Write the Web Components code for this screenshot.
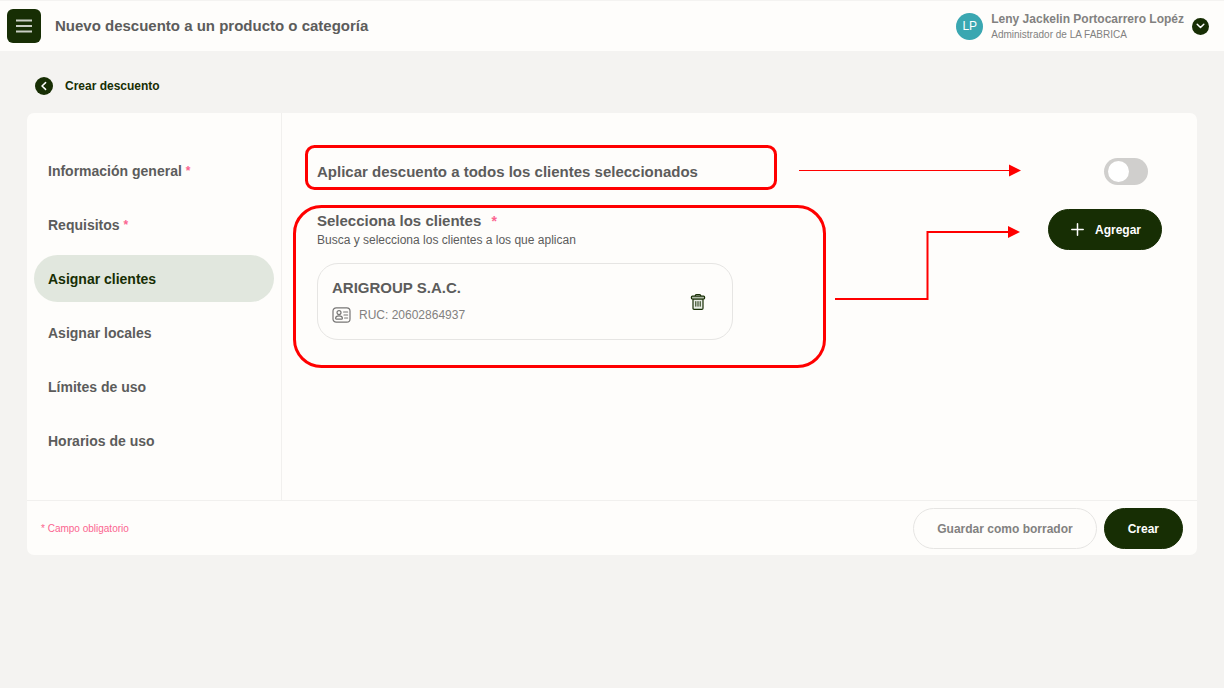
<!DOCTYPE html>
<html lang="es">
<head>
  <meta charset="utf-8">
  <meta name="viewport" content="width=device-width, initial-scale=1">
  <title>Nuevo descuento a un producto o categoría</title>
  <style>
    html {
      --green: #172e04;
      --paper: #fefdfb;
      --page: #f4f3f1;
      --line: #f1f0ee;
      --outline: #e6e5e3;
      --text: #5c5c5b;
      --muted: #828180;
      --pink: #fb6590;
      --mark: #ff0000;
    }

    body {
      margin: 0;
      min-height: 100vh;
      background: var(--page);
      color: var(--text);
      font: 12px/16px "Liberation Sans", Arial, sans-serif;
    }
  </style>
</head>
<body>
  <discount-page></discount-page>

  <script>
    class AppHeader extends HTMLElement {
      shadowRoot = this.attachShadow({ mode: 'open' });

      connectedCallback() {
        this.shadowRoot.innerHTML = `
          <style>
            :host {
              display: flex;
              align-items: center;
              box-sizing: border-box;
              height: 51px;
              padding: 0 15px 0 7px;
              border-top: 1px solid var(--page);
              background: var(--paper);
            }

            button {
              display: grid;
              place-items: center;
              padding: 0;
              border: 0;
              background: var(--green);
              color: #fff;
            }

            .menu {
              width: 34px;
              height: 34px;
              border-radius: 6px;
            }

            h1 {
              flex: 1;
              margin: 0 0 0 14px;
              font-size: 15px;
              line-height: 20px;
            }

            .avatar {
              width: 27px;
              height: 27px;
              margin-right: 8px;
              border-radius: 50%;
              background: #3aa7b1;
              color: #fff;
              line-height: 27px;
              text-align: center;
            }

            .user {
              padding-top: 2px;
              color: var(--muted);
              font-size: 10px;
              line-height: 15px;
            }

            .user b {
              display: block;
              font-size: 12px;
            }

            .more {
              width: 17px;
              height: 17px;
              margin-left: 8px;
              border-radius: 50%;
            }
          </style>
          <button class="menu" type="button" aria-label="Menú">
            <svg width="16" height="14" fill="none" stroke="#c9cec4" stroke-width="1.8">
              <path d="M0 1.5h16M0 7h16M0 12.5h16"/>
            </svg>
          </button>
          <h1><slot></slot></h1>
          <div class="avatar">LP</div>
          <div class="user">
            <b><slot name="user"></slot></b>
            <slot name="role"></slot>
          </div>
          <button class="more" type="button" aria-label="Cuenta">
            <svg width="9" height="6" fill="none" stroke="currentColor" stroke-width="1.5" stroke-linecap="round" stroke-linejoin="round">
              <path d="M1.2 1.2 4.5 4.5 7.8 1.2"/>
            </svg>
          </button>
        `;
      }
    }

    class BackLink extends HTMLElement {
      shadowRoot = this.attachShadow({ mode: 'open' });

      connectedCallback() {
        this.shadowRoot.innerHTML = `
          <style>
            :host {
              display: flex;
            }

            a {
              display: flex;
              align-items: center;
              gap: 12px;
              color: var(--green);
              font-weight: bold;
              text-decoration: none;
            }
          </style>
          <a href="#">
            <svg width="18" height="18">
              <circle cx="9" cy="9" r="9" fill="var(--green)"/>
              <path d="M10.6 5.6 7 9l3.6 3.4" fill="none" stroke="#fff" stroke-width="1.5" stroke-linecap="round" stroke-linejoin="round"/>
            </svg>
            <slot></slot>
          </a>
        `;
      }
    }

    class StepLink extends HTMLElement {
      shadowRoot = this.attachShadow({ mode: 'open' });

      connectedCallback() {
        this.shadowRoot.innerHTML = `
          <style>
            :host {
              display: block;
            }

            a {
              display: flex;
              align-items: center;
              gap: 4px;
              height: 47px;
              padding: 0 14px;
              border-radius: 24px;
              color: var(--text);
              font-size: 14px;
              font-weight: bold;
              text-decoration: none;
            }

            :host([active]) a {
              background: #e1e7de;
              color: var(--green);
            }

            .required {
              color: var(--pink);
              font-size: 12px;
            }
          </style>
          <a href="#">
            <slot></slot>
            ${this.hasAttribute('required') ? '<span class="required">*</span>' : ''}
          </a>
        `;
      }
    }

    class PillButton extends HTMLElement {
      shadowRoot = this.attachShadow({ mode: 'open' });

      connectedCallback() {
        this.shadowRoot.innerHTML = `
          <style>
            :host {
              display: block;
            }

            button {
              display: flex;
              align-items: center;
              gap: 11px;
              height: 41px;
              padding: 0 23px;
              border: 1px solid var(--green);
              border-radius: 21px;
              background: var(--green);
              color: #fff;
              font: bold 12px/16px "Liberation Sans", Arial, sans-serif;
            }

            :host([outline]) button {
              border-color: var(--outline);
              background: transparent;
              color: var(--muted);
            }

            :host([small]) button {
              padding: 0 20px 0 22px;
            }
          </style>
          <button type="button"><slot name="icon"></slot><slot></slot></button>
        `;
      }
    }

    class ToggleSwitch extends HTMLElement {
      shadowRoot = this.attachShadow({ mode: 'open' });

      connectedCallback() {
        this.shadowRoot.innerHTML = `
          <style>
            :host {
              display: flex;
            }

            label {
              display: flex;
              flex: 1;
              align-items: center;
              justify-content: space-between;
            }

            input {
              appearance: none;
              box-sizing: border-box;
              width: 44px;
              height: 27px;
              margin: 0;
              padding: 3px 4px;
              border-radius: 14px;
              background: #d0cfcd;
            }

            input::before {
              content: '';
              display: block;
              width: 21px;
              height: 21px;
              border-radius: 50%;
              background: #fff;
            }

            input:checked {
              padding-left: 19px;
              background: var(--green);
            }
          </style>
          <label><slot></slot><input type="checkbox" role="switch"></label>
        `;
      }
    }

    class ClientCard extends HTMLElement {
      shadowRoot = this.attachShadow({ mode: 'open' });

      connectedCallback() {
        this.shadowRoot.innerHTML = `
          <style>
            :host {
              display: flex;
              align-items: center;
              justify-content: space-between;
              box-sizing: border-box;
              padding: 14px 26px 14px 14px;
              border: 1px solid var(--outline);
              border-radius: 21px;
            }

            h3 {
              margin: 0 0 7px;
              font-size: 15px;
              line-height: 20px;
            }

            p {
              display: flex;
              align-items: center;
              gap: 8px;
              margin: 0;
              color: var(--muted);
              line-height: 20px;
            }

            button {
              padding: 0;
              border: 0;
              background: none;
            }

            svg {
              display: block;
              fill: none;
            }
          </style>
          <div>
            <h3><slot></slot></h3>
            <p>
              <svg width="19" height="16" stroke="#777675" stroke-width="1.2" stroke-linecap="round">
                <rect x="1" y=".8" width="17" height="14.4" rx="3.2"/>
                <circle cx="7" cy="5.6" r="2"/>
                <path d="M3.6 11.2c0-1.7 1.5-2.3 3.4-2.3s3.4.6 3.4 2.3c0 .6-.3.9-.8.9H4.4c-.5 0-.8-.3-.8-.9Z"/>
                <path d="M11.6 5h4M12 8h3.6M12.6 11h3"/>
              </svg>
              <slot name="ruc"></slot>
            </p>
          </div>
          <button type="button" aria-label="Eliminar cliente">
            <svg width="16" height="18" stroke="var(--green)" stroke-width="1.2" stroke-linejoin="round">
              <path d="M3 5.8h10v9.4c0 .7-.4 1.1-1.1 1.1H4.1c-.7 0-1.1-.4-1.1-1.1Z" fill="#e9ede6"/>
              <rect x="1.4" y="3.2" width="13.2" height="2.8" rx="1" fill="#b3bdab"/>
              <path d="M5.2 3.1c0-1 .5-1.5 1.3-1.5h3c.8 0 1.3.5 1.3 1.5"/>
              <path d="M5.8 8.2v5.4M8 8.2v5.4M10.2 8.2v5.4" stroke-width="1"/>
            </svg>
          </button>
        `;
      }
    }

    // Red frames and arrows that lie over the form
    class GuideMarks extends HTMLElement {
      shadowRoot = this.attachShadow({ mode: 'open' });

      connectedCallback() {
        this.shadowRoot.innerHTML = `
          <style>
            :host {
              position: absolute;
              inset: 0;
              pointer-events: none;
            }

            svg {
              display: block;
              width: 100%;
              height: 100%;
              fill: none;
              stroke: var(--mark);
            }

            .head {
              fill: var(--mark);
              stroke: none;
            }
          </style>
          <svg aria-hidden="true">
            <rect x="24.5" y="33.5" width="469" height="42" rx="8" stroke-width="3"/>
            <rect x="12.5" y="93.5" width="530" height="160" rx="27" stroke-width="3"/>
            <path d="M517 57.5h211"/>
            <path class="head" d="m727 51.5 12 6-12 6Z"/>
            <path d="M553 186h92.5v-67h81" stroke-width="2"/>
            <path class="head" d="m726 113 12 6-12 6Z"/>
          </svg>
        `;
      }
    }

    class DiscountPage extends HTMLElement {
      shadowRoot = this.attachShadow({ mode: 'open' });

      connectedCallback() {
        this.shadowRoot.innerHTML = `
          <style>
            :host {
              display: block;
            }

            main {
              padding: 26px 27px;
            }

            back-link {
              padding-left: 8px;
            }

            .card {
              margin-top: 18px;
              border-radius: 7px;
              background: var(--paper);
            }

            .body {
              display: grid;
              grid-template-columns: 255px 1fr;
              border-bottom: 1px solid var(--line);
            }

            nav {
              display: flex;
              flex-direction: column;
              gap: 7px;
              padding: 34px 7px 36px;
              border-right: 1px solid var(--line);
            }

            .content {
              position: relative;
              padding: 45px 35px 35px;
            }

            toggle-switch {
              padding-right: 14px;
            }

            h2 {
              margin: 0;
              font-size: 15px;
              line-height: 20px;
            }

            h2 span {
              margin-left: 6px;
              color: var(--pink);
              font-size: 14px;
            }

            .clients {
              display: flex;
              align-items: flex-start;
              justify-content: space-between;
              margin-top: 24px;
            }

            .intro {
              padding-top: 2px;
            }

            .intro p {
              margin: 0;
              line-height: 18px;
            }

            .list {
              display: grid;
              grid-template-columns: 1fr 1fr;
              gap: 13px;
              margin-top: 13px;
            }

            footer {
              display: flex;
              align-items: center;
              gap: 7px;
              padding: 7px 14px 6px;
            }

            footer small {
              flex: 1;
              color: var(--pink);
              font-size: 10px;
            }
          </style>
          <app-header>
            Nuevo descuento a un producto o categoría
            <span slot="user">Leny Jackelin Portocarrero Lopéz</span>
            <span slot="role">Administrador de LA FABRICA</span>
          </app-header>
          <main>
            <back-link>Crear descuento</back-link>
            <div class="card">
              <div class="body">
                <nav>
                  <step-link required>Información general</step-link>
                  <step-link required>Requisitos</step-link>
                  <step-link active>Asignar clientes</step-link>
                  <step-link>Asignar locales</step-link>
                  <step-link>Límites de uso</step-link>
                  <step-link>Horarios de uso</step-link>
                </nav>
                <section class="content">
                  <toggle-switch><h2>Aplicar descuento a todos los clientes seleccionados</h2></toggle-switch>
                  <div class="clients">
                    <div class="intro">
                      <h2>Selecciona los clientes <span>*</span></h2>
                      <p>Busca y selecciona los clientes a los que aplican</p>
                    </div>
                    <pill-button small>
                      <svg slot="icon" width="13" height="13" fill="none" stroke="currentColor" stroke-width="1.5" stroke-linecap="round">
                        <path d="M6.5 .8v11.4M.8 6.5h11.4"/>
                      </svg>
                      Agregar
                    </pill-button>
                  </div>
                  <div class="list">
                    <client-card>ARIGROUP S.A.C.<span slot="ruc">RUC: 20602864937</span></client-card>
                  </div>
                  <guide-marks></guide-marks>
                </section>
              </div>
              <footer>
                <small>* Campo obligatorio</small>
                <pill-button outline>Guardar como borrador</pill-button>
                <pill-button>Crear</pill-button>
              </footer>
            </div>
          </main>
        `;
      }
    }

    customElements.define('app-header', AppHeader);
    customElements.define('back-link', BackLink);
    customElements.define('step-link', StepLink);
    customElements.define('pill-button', PillButton);
    customElements.define('toggle-switch', ToggleSwitch);
    customElements.define('client-card', ClientCard);
    customElements.define('guide-marks', GuideMarks);
    customElements.define('discount-page', DiscountPage);
  </script>
</body>
</html>
